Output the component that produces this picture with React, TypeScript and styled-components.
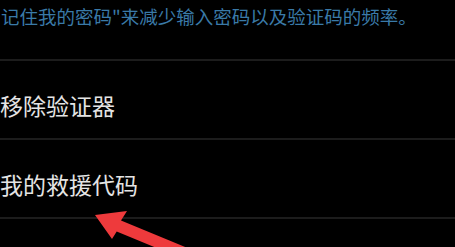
import React from "react";
import styled, { createGlobalStyle } from "styled-components";

const Global = createGlobalStyle`
  html, body { margin: 0; padding: 0; background: #000; }
  body { font-family: "Noto Sans CJK SC", "Noto Sans", sans-serif; }
`;

const Page = styled.div`
  position: relative;
  width: 455px;
  height: 247px;
  overflow: hidden;
  background: #000;
`;

const Hint = styled.div`
  box-sizing: border-box;
  height: 61px;
  padding: 5px 0 0 1px;
  font-size: 18.5px;
  line-height: 22px;
  color: #3a7aa8;
  white-space: nowrap;
  border-bottom: 2px solid #1c1c1c;
`;

const Row = styled.div`
  box-sizing: border-box;
  height: 79px;
  padding: 32px 0 0 0;
  font-size: 23px;
  line-height: 24px;
  color: #e4e4e4;
  white-space: nowrap;
  border-bottom: 2px solid #1c1c1c;
`;

const Arrow = styled.svg`
  position: absolute;
  left: 0;
  top: 0;
  width: 455px;
  height: 247px;
  pointer-events: none;
`;

export default function App() {
  return (
    <>
      <Global />
      <Page>
        <Hint>记住我的密码"来减少输入密码以及验证码的频率。</Hint>
        <Row>移除验证器</Row>
        <Row>我的救援代码</Row>
        <Arrow viewBox="0 0 455 247">
          <polygon
            points="95,215 127,211 121,220.5 213,258.5 208.7,269.5 116.7,231.5 112,239"
            fill="#ee3a3c"
          />
        </Arrow>
      </Page>
    </>
  );
}
